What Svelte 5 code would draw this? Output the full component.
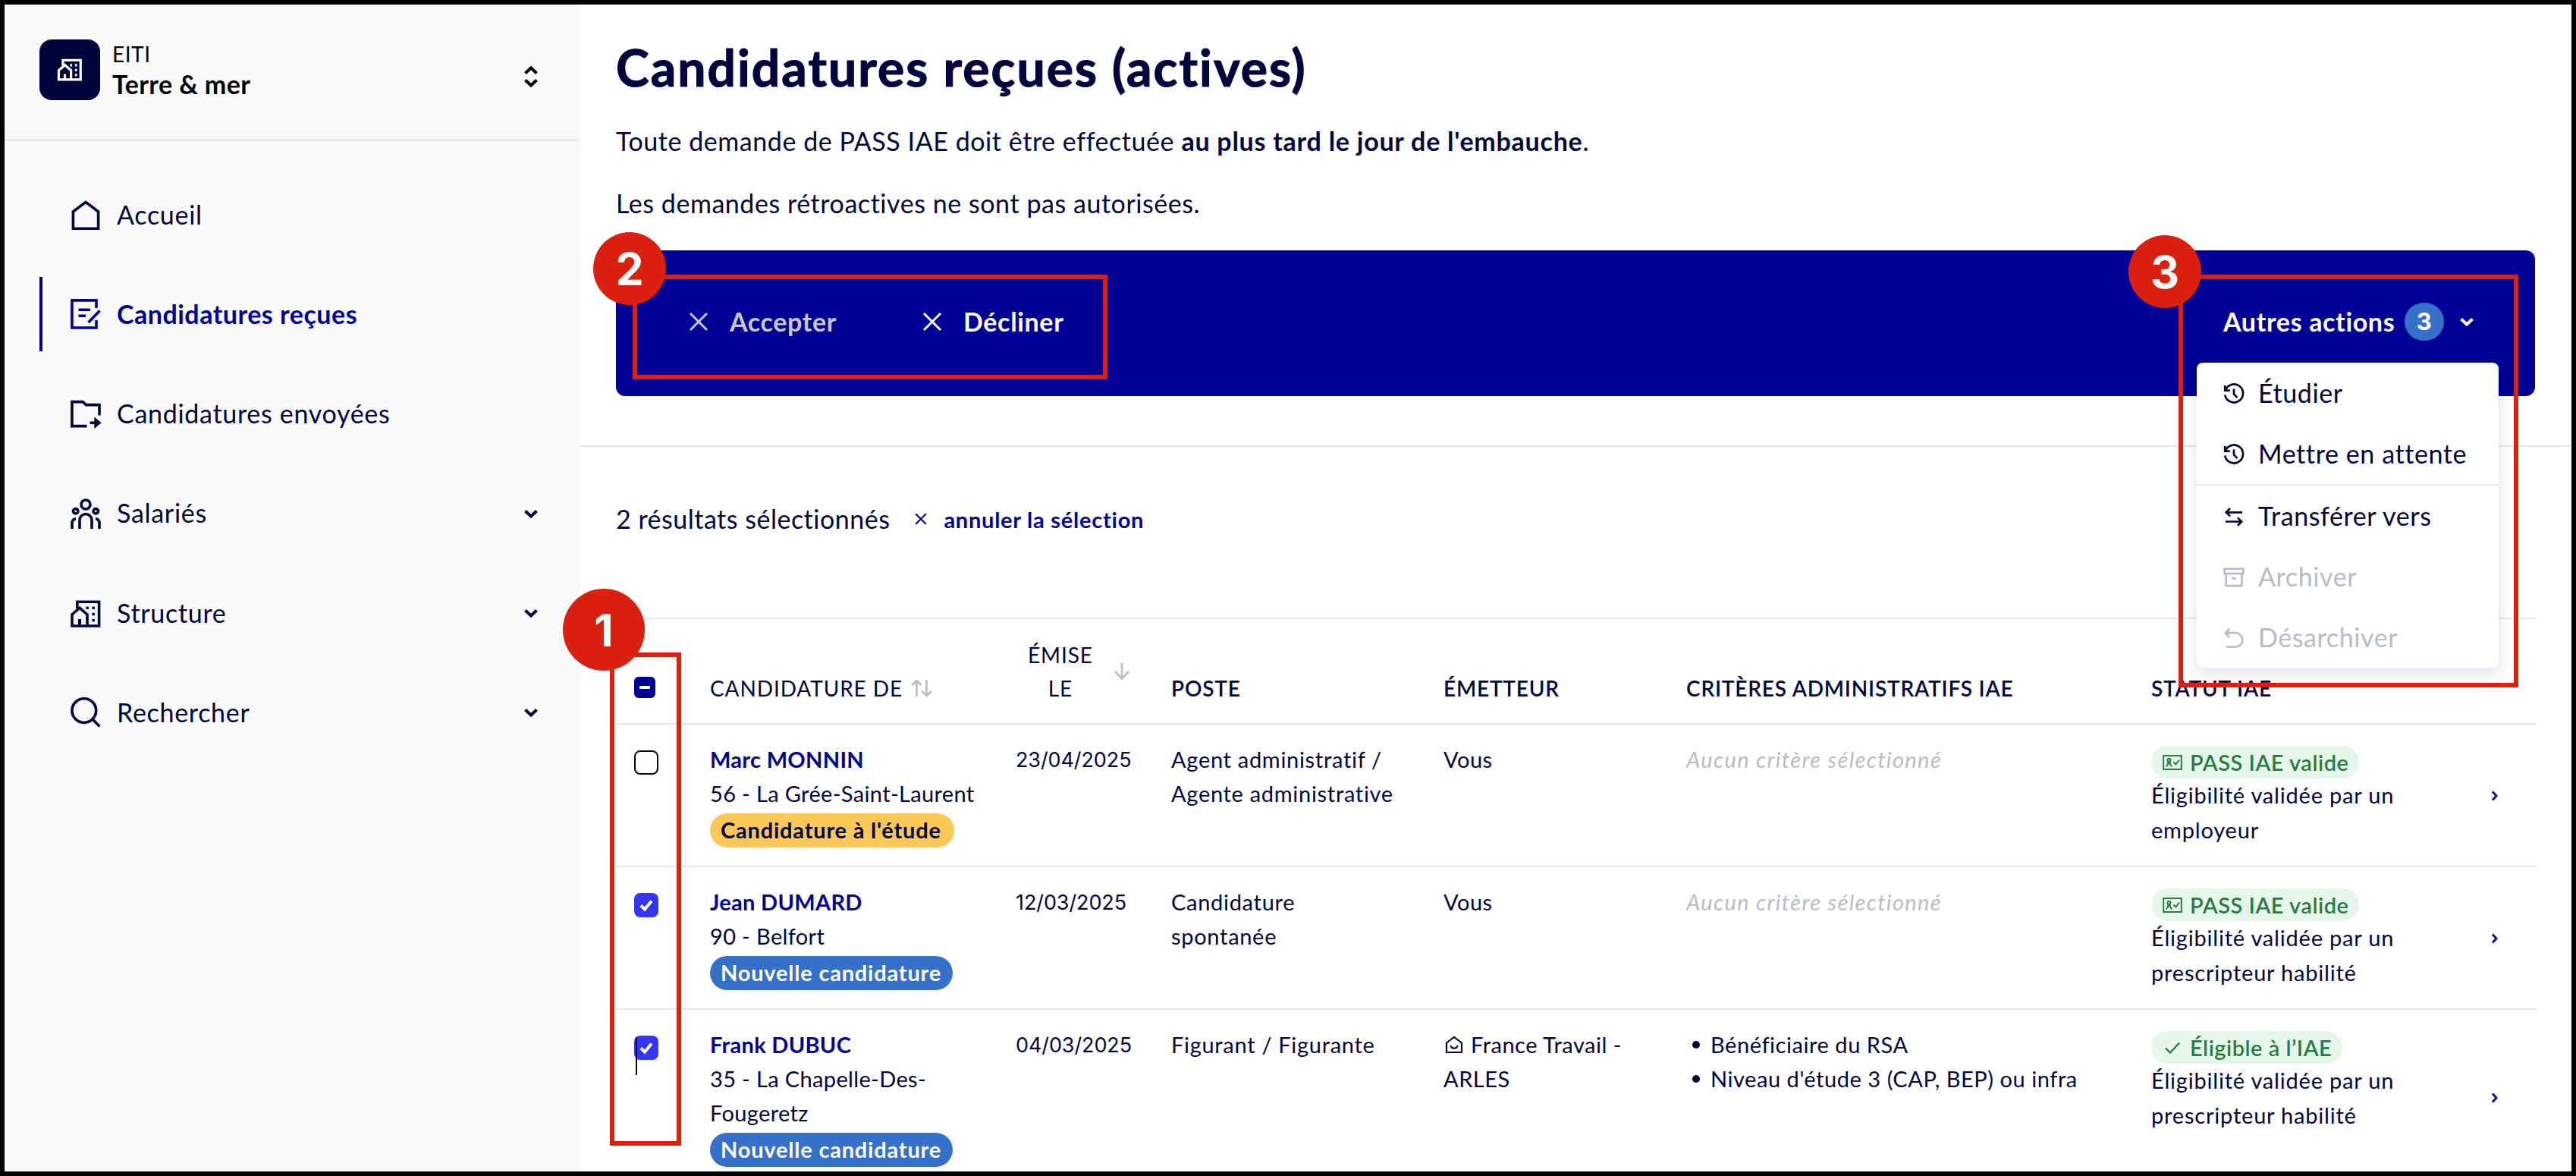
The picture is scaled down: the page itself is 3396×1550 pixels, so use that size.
<script lang="ts">
  type NavItem = { label: string; icon: string; active?: boolean; expandable?: boolean };
  type Row = {
    name: string;
    city: string[];
    state: string;
    pending?: boolean;
    date: string;
    job: string[];
    sender: string[];
    orienter?: boolean;
    criteria: string[];
    pass: string;
    passIcon: 'card' | 'check';
    eligibility: string[];
    checked: boolean;
  };

  const navItems: NavItem[] = [
    { label: 'Accueil', icon: 'home' },
    { label: 'Candidatures reçues', icon: 'edit', active: true },
    { label: 'Candidatures envoyées', icon: 'folder' },
    { label: 'Salariés', icon: 'group', expandable: true },
    { label: 'Structure', icon: 'building', expandable: true },
    { label: 'Rechercher', icon: 'search', expandable: true },
  ];

  const actions = [
    { label: 'Étudier', icon: 'history' },
    { label: 'Mettre en attente', icon: 'history', divider: true },
    { label: 'Transférer vers', icon: 'swap' },
    { label: 'Archiver', icon: 'archive', disabled: true },
    { label: 'Désarchiver', icon: 'undo', disabled: true },
  ];

  let rows = $state<Row[]>([
    {
      name: 'Marc MONNIN',
      city: ['56 - La Grée-Saint-Laurent'],
      state: "Candidature à l'étude",
      pending: true,
      date: '23/04/2025',
      job: ['Agent administratif /', 'Agente administrative'],
      sender: ['Vous'],
      criteria: [],
      pass: 'PASS IAE valide',
      passIcon: 'card',
      eligibility: ['Éligibilité validée par un', 'employeur'],
      checked: false,
    },
    {
      name: 'Jean DUMARD',
      city: ['90 - Belfort'],
      state: 'Nouvelle candidature',
      date: '12/03/2025',
      job: ['Candidature', 'spontanée'],
      sender: ['Vous'],
      criteria: [],
      pass: 'PASS IAE valide',
      passIcon: 'card',
      eligibility: ['Éligibilité validée par un', 'prescripteur habilité'],
      checked: true,
    },
    {
      name: 'Frank DUBUC',
      city: ['35 - La Chapelle-Des-', 'Fougeretz'],
      state: 'Nouvelle candidature',
      date: '04/03/2025',
      job: ['Figurant / Figurante'],
      sender: ['France Travail -', 'ARLES'],
      orienter: true,
      criteria: ['Bénéficiaire du RSA', "Niveau d'étude 3 (CAP, BEP) ou infra"],
      pass: 'Éligible à l’IAE',
      passIcon: 'check',
      eligibility: ['Éligibilité validée par un', 'prescripteur habilité'],
      checked: true,
    },
  ]);

  let selected = $derived(rows.filter((r) => r.checked).length);
</script>

{#snippet building()}
  <path d="M8.8 14V5.3H37.6V37H2V22L12 13.2L22 22V37" />
  <path d="M12 37V28" stroke-width="4" />
  <path d="M20.4 13.3h3.4M28.4 13.3h3.4M28.4 21.5h3.4M28.4 29.5h3.4" />
{/snippet}

{#snippet chevron()}
  <svg class="chevron" viewBox="0 0 20 14"><path d="M2.5 3.5L10 10.5L17.5 3.5" /></svg>
{/snippet}

{#snippet cross(cls: string)}
  <svg class="cross {cls}" viewBox="0 0 26 26"><path d="M2 2L24 24M24 2L2 24" /></svg>
{/snippet}

<div class="frame">
  <aside class="sidebar">
    <div class="org">
      <div class="org-logo">
        <svg viewBox="0 0 40 42">{@render building()}</svg>
      </div>
      <div class="org-text">
        <span class="org-kind">EITI</span>
        <span class="org-name">Terre &amp; mer</span>
      </div>
      <svg class="selector" viewBox="0 0 20 28"><path d="M2.5 9.5L10 2.5L17.5 9.5M2.5 18.5L10 25.5L17.5 18.5" /></svg>
    </div>

    <nav>
      {#each navItems as item}
        <a href="#{item.icon}" class="nav-item" class:active={item.active}>
          <svg class="nav-icon" viewBox="0 0 40 40">
            {#if item.icon === 'home'}
              <path d="M3.4 16L20 3.4L36.6 16V38.2H3.4Z" />
            {:else if item.icon === 'edit'}
              <path d="M34 12V1.9H1.9V38H34V28" />
              <path d="M10.5 14.3H26M10.5 22.3H20M38.5 15.5L23.5 31" />
            {:else if item.icon === 'folder'}
              <path d="M38 21.5V7.6H20.3L16.3 3.6H1.9V35.6H21.5" />
              <path d="M25.5 31.3H33" />
              <path class="solid" d="M31.3 23.6L40.6 31.3L31.3 39Z" />
            {:else if item.icon === 'group'}
              <circle cx="20" cy="8" r="6" />
              <circle cx="6.7" cy="16.8" r="3.2" />
              <circle cx="33.3" cy="16.8" r="3.2" />
              <path d="M12 40V28.5a8 8 0 0 1 16 0V40M2 40V32.5q0-5 5-6M38 40V32.5q0-5-5-6" />
            {:else if item.icon === 'building'}
              {@render building()}
            {:else}
              <circle cx="17.8" cy="17.6" r="15.9" />
              <path d="M28.5 28.5L38.5 38.5" />
            {/if}
          </svg>
          <span>{item.label}</span>
          {#if item.expandable}{@render chevron()}{/if}
        </a>
      {/each}
    </nav>
  </aside>

  <main>
    <header class="page-head">
      <h1>Candidatures reçues (actives)</h1>
      <p>Toute demande de PASS IAE doit être effectuée <strong>au plus tard le jour de l'embauche</strong>.</p>
      <p>Les demandes rétroactives ne sont pas autorisées.</p>

      <div class="action-bar">
        <button class="bar-btn muted">{@render cross('')}Accepter</button>
        <button class="bar-btn">{@render cross('')}Décliner</button>
        <div class="dropdown">
          <button class="bar-btn toggle">
            <span>Autres actions</span>
            <span class="count">3</span>
            {@render chevron()}
          </button>
          <ul class="menu">
            {#each actions as action}
              <li class:disabled={action.disabled} class:divider={action.divider}>
                <svg viewBox="0 0 28 28">
                  {#if action.icon === 'history'}
                    <path d="M2.2 3V9.6H8.8" />
                    <path d="M2.8 9.2A12 12 0 1 1 2.2 15.5M14 7.5V14.5L18.5 19" />
                  {:else if action.icon === 'swap'}
                    <path d="M25 8.3H4M9 3L3.8 8.3L9 13.4M3 20.5H24M19 15.4L24.2 20.5L19 25.8" />
                  {:else if action.icon === 'archive'}
                    <path d="M1.6 2.8H26.4V9H1.6ZM3.6 9V25.2H24.4V9M11 15.2H17" />
                  {:else}
                    <path d="M8.5 1.5L3 7.2L8.5 13M3.5 7.2H16a9.2 9.2 0 0 1 0 18.4H4" />
                  {/if}
                </svg>
                {action.label}
              </li>
            {/each}
          </ul>
        </div>
      </div>
    </header>

    <section class="results">
      <div class="summary">
        <span>{selected} résultats sélectionnés</span>
        {@render cross('tiny')}
        <a href="#reset">annuler la sélection</a>
      </div>

      <div class="table">
        <div class="row thead">
          <div><span class="box partial"></span></div>
          <div class="sortable">
            CANDIDATURE DE
            <svg class="sort" viewBox="0 0 28 24"><path d="M7.5 23V2M1.5 8L7.5 2L13.5 8M20.5 1V22M14.5 16L20.5 22L26.5 16" /></svg>
          </div>
          <div class="sent">
            <span>ÉMISE<br />LE</span>
            <svg viewBox="0 0 22 24"><path d="M11 1V21M2 12L11 21.5L20 12" /></svg>
          </div>
          <div class="strong">POSTE</div>
          <div class="strong">ÉMETTEUR</div>
          <div class="strong">CRITÈRES ADMINISTRATIFS IAE</div>
          <div class="strong">STATUT IAE</div>
          <div></div>
        </div>

        {#each rows as row, i}
          <div class="row">
            <div class="check-cell">
              <span class="box" class:checked={row.checked}>
                {#if row.checked}
                  <svg viewBox="0 0 20 18"><path d="M3 9.5L8 14.5L17 3.5" /></svg>
                {/if}
              </span>
              {#if i === rows.length - 1}<span class="caret"></span>{/if}
            </div>
            <div class="candidate">
              <a class="name" href="#{i}">{row.name}</a>
              {#each row.city as line}<div>{line}</div>{/each}
              <span class="state" class:pending={row.pending}>{row.state}</span>
            </div>
            <div class="date">{row.date}</div>
            <div class="job">{#each row.job as line}<div>{line}</div>{/each}</div>
            <div>
              {#each row.sender as line, n}
                <div class="sender">
                  {#if row.orienter && n === 0}
                    <svg viewBox="0 0 24 24"><path d="M2 9.5L12 1.8L22 9.5V22H2ZM7.5 13a4.6 4.6 0 0 0 9 0" /></svg>
                  {/if}
                  {line}
                </div>
              {/each}
            </div>
            <div>
              {#if row.criteria.length}
                <ul class="criteria">
                  {#each row.criteria as c}<li>{c}</li>{/each}
                </ul>
              {:else}
                <i class="none">Aucun critère sélectionné</i>
              {/if}
            </div>
            <div class="status">
              <span class="pass">
                {#if row.passIcon === 'card'}
                  <svg viewBox="0 0 26 22">
                    <path d="M1.2 2H24.8V20H1.2Z" />
                    <circle cx="8.5" cy="7.8" r="2" />
                    <path d="M4.8 16.5L8.5 11L12.2 16.5M6 11.2H11M14.5 10.5L17.5 13.5L22 7.5" />
                  </svg>
                {:else}
                  <svg viewBox="0 0 26 22"><path d="M4 11.5L10 17.5L22 4.5" stroke-width="2.4" /></svg>
                {/if}
                {row.pass}
              </span>
              {#each row.eligibility as line}<div>{line}</div>{/each}
            </div>
            <div class="go">
              <svg viewBox="0 0 8 14"><path d="M1.5 1.5L6.5 7L1.5 12.5" /></svg>
            </div>
          </div>
        {/each}
      </div>
    </section>
  </main>

  <!-- Numbered callouts laid over the page -->
  <div class="callout one"><b>1</b></div>
  <div class="callout two"><b>2</b></div>
  <div class="callout three"><b>3</b></div>
</div>

<style>
  :global(body) {
    background: #fff;
  }
  .frame {
    --navy: #00053d;
    --blue: #000096;
    --line: #e7e8ee;
    --grey: #b9bac9;
    --red: #dc200f;
    position: relative;
    box-sizing: border-box;
    width: 3396px;
    height: 1550px;
    border: 6px solid #000;
    overflow: hidden;
    display: flex;
    font-family: Lato, 'Open Sans', sans-serif;
    font-size: 34px;
    line-height: 50px;
    letter-spacing: 0.55px;
    color: var(--navy);
    background: #fff;
  }
  svg {
    flex: none;
    fill: none;
    stroke: currentColor;
    overflow: visible;
  }
  a {
    color: inherit;
    text-decoration: none;
  }
  ul {
    list-style: none;
    margin: 0;
    padding: 0;
  }

  /* Sidebar */
  .sidebar {
    width: 758px;
    flex: none;
    background: #f9f9f9;
  }
  .org {
    height: 177px;
    display: flex;
    align-items: flex-start;
    border-bottom: 3px solid var(--line);
    color: #000;
  }
  .org-logo {
    width: 80px;
    height: 80px;
    margin: 46px 16px 0 46px;
    display: flex;
    align-items: center;
    justify-content: center;
    border-radius: 16px;
    background: var(--navy);
    color: #fff;
  }
  .org-logo svg {
    width: 34px;
    height: 34px;
    stroke-width: 4;
  }
  .org-text {
    display: flex;
    flex-direction: column;
    flex: 1;
    margin-top: 47px;
  }
  .org-kind {
    font-size: 28px;
    line-height: 36px;
  }
  .org-name {
    font-weight: 700;
    line-height: 43px;
    letter-spacing: 0.4px;
  }
  .selector {
    width: 20px;
    height: 28px;
    margin: 81px 54px 0 0;
    stroke-width: 4;
  }
  nav {
    padding-top: 48px;
    display: flex;
    flex-direction: column;
    gap: 33.3px;
  }
  .nav-item {
    height: 98px;
    margin-left: 46px;
    padding: 0 54px 0 37px;
    display: flex;
    align-items: center;
    gap: 21px;
    border-left: 4px solid transparent;
  }
  .nav-item span {
    flex: 1;
    margin-top: -1px;
    letter-spacing: 0.7px;
  }
  .nav-item.active {
    font-weight: 700;
    color: var(--blue);
    border-color: var(--blue);
  }
  .nav-item.active span {
    letter-spacing: 0.5px;
  }
  .nav-icon {
    width: 40px;
    height: 40px;
    stroke-width: 3.6;
  }
  .nav-icon .solid {
    fill: currentColor;
    stroke: none;
  }
  .chevron {
    width: 20px;
    height: 14px;
    stroke-width: 4;
  }

  /* Page head */
  main {
    flex: 1;
  }
  .page-head {
    height: 583px;
    box-sizing: border-box;
    padding: 43px 48px 0;
    border-bottom: 2px solid var(--line);
  }
  h1 {
    margin: 0;
    font-size: 66px;
    line-height: 80px;
    font-weight: 700;
    letter-spacing: 2.05px;
    -webkit-text-stroke: 1.2px currentColor;
  }
  p {
    margin: 32px 0 0;
  }
  strong {
    letter-spacing: 0.75px;
  }
  .action-bar {
    box-sizing: border-box;
    height: 192px;
    margin-top: 37px;
    padding: 69px 48px 0 96px;
    display: flex;
    align-items: flex-start;
    border-radius: 12px;
    background: var(--blue);
  }
  .bar-btn {
    display: flex;
    align-items: center;
    gap: 28px;
    width: 308px;
    padding: 0;
    border: 0;
    background: none;
    font: inherit;
    font-weight: 700;
    letter-spacing: 0.65px;
    color: #fff;
  }
  .bar-btn.muted {
    color: #c8c8cc;
  }
  .cross {
    width: 26px;
    height: 26px;
    stroke-width: 3;
  }
  .cross.tiny {
    width: 16px;
    height: 16px;
    margin: 0 22px 0 33px;
    stroke-width: 3.6;
    color: var(--blue);
  }
  .dropdown {
    position: relative;
    width: 398px;
    margin-left: auto;
  }
  .toggle {
    width: 100%;
    box-sizing: border-box;
    padding: 0 32px 0 35px;
    gap: 0;
  }
  .toggle .count {
    width: 52px;
    height: 50px;
    margin: 0 20px 0 auto;
    border-radius: 26px;
    background: #3570cb;
    font: 700 31px/50px Inter, sans-serif;
    text-align: center;
  }
  .menu {
    position: absolute;
    top: 79px;
    left: 0;
    width: 398px;
    height: 402px;
    border-radius: 8px;
    background: #fff;
    box-shadow: 0 8px 24px rgba(0, 6, 56, 0.12);
    z-index: 1;
  }
  .menu li {
    box-sizing: border-box;
    height: 80px;
    padding: 0 0 1px 35px;
    display: flex;
    align-items: center;
    gap: 18px;
    letter-spacing: 0.6px;
  }
  .menu li.divider {
    height: 82px;
    border-bottom: 2px solid var(--line);
  }
  .menu li.disabled {
    color: var(--grey);
  }
  .menu svg {
    width: 28px;
    height: 28px;
    margin-top: 2px;
    stroke-width: 2.7;
  }

  /* Results */
  .results {
    padding: 69px 46px 0 48px;
  }
  .summary {
    display: flex;
    align-items: center;
    margin-bottom: 104px;
  }
  .summary span {
    letter-spacing: 0.5px;
  }
  .summary a {
    margin-top: 2px;
    font-size: 29px;
    font-weight: 700;
    letter-spacing: 0.75px;
    color: var(--blue);
  }
  .table {
    border-top: 2px solid var(--line);
    font-size: 29px;
    line-height: 45px;
    letter-spacing: 0.5px;
  }
  .row {
    box-sizing: border-box;
    display: grid;
    grid-template-columns: 124px 404px 204px 359px 320px 613px 448px 60px;
    padding-top: 23px;
    height: 188px;
    border-bottom: 2px solid var(--line);
  }
  .row:last-child {
    height: 232px;
  }
  .thead {
    height: 139px;
    padding: 0 0 24px;
    align-items: end;
    font-size: 28px;
    line-height: 44px;
    letter-spacing: 0.9px;
  }
  .strong {
    font-weight: 600;
    letter-spacing: 0.8px;
  }
  .sortable {
    display: flex;
    align-items: center;
    gap: 11px;
  }
  .thead svg {
    color: var(--grey);
    stroke-width: 2.6;
  }
  .sort {
    width: 28px;
    height: 24px;
  }
  .sent {
    display: flex;
    align-items: center;
    padding-left: 15px;
    gap: 27px;
    text-align: center;
  }
  .sent svg {
    width: 22px;
    height: 24px;
  }
  .box {
    box-sizing: border-box;
    display: flex;
    align-items: center;
    justify-content: center;
    width: 32px;
    height: 32px;
    margin-left: 24px;
    border: 2.5px solid var(--navy);
    border-radius: 8px;
    background: #fff;
  }
  .box.checked {
    border: 0;
    background: #3535f5;
    color: #fff;
  }
  .box svg {
    width: 20px;
    height: 18px;
    stroke-width: 4;
  }
  .box.partial {
    width: 28px;
    height: 28px;
    margin-bottom: 9px;
    border: 0;
    border-radius: 6px;
    background: var(--blue);
  }
  .box.partial::after {
    content: '';
    width: 14px;
    height: 4px;
    border-radius: 1px;
    background: #fff;
  }
  .check-cell {
    position: relative;
    padding-top: 11px;
  }
  .caret {
    position: absolute;
    top: 13px;
    left: 26px;
    width: 2px;
    height: 50px;
    background: var(--navy);
  }
  .candidate {
    letter-spacing: 0.35px;
  }
  .name {
    font-weight: 700;
    letter-spacing: 0.3px;
    color: var(--blue);
  }
  .state {
    display: block;
    box-sizing: border-box;
    width: 320px;
    height: 45px;
    margin-top: 4px;
    padding-left: 14px;
    border-radius: 23px;
    background: #3570cb;
    color: #fff;
    font-weight: 700;
    line-height: 44px;
    letter-spacing: 0.8px;
    white-space: nowrap;
  }
  .state.pending {
    width: 322px;
    background: #fbc858;
    color: var(--navy);
  }
  .date {
    font: 400 27px/47px Inter, sans-serif;
    letter-spacing: -0.1px;
    margin-left: -1px;
  }
  .job {
    letter-spacing: 0.7px;
  }
  .sender {
    display: flex;
    align-items: center;
    gap: 10px;
  }
  .sender svg {
    width: 24px;
    height: 24px;
    margin-left: 2px;
    stroke-width: 2.2;
  }
  .none {
    color: var(--grey);
    letter-spacing: 1.35px;
  }
  .criteria li {
    display: flex;
    align-items: center;
    gap: 14px;
    padding-left: 8px;
    letter-spacing: 0.55px;
  }
  .criteria li::before {
    content: '';
    width: 10px;
    height: 10px;
    border-radius: 50%;
    background: currentColor;
  }
  .status {
    line-height: 46px;
    letter-spacing: 0.8px;
  }
  .pass {
    display: flex;
    align-items: center;
    gap: 10px;
    width: fit-content;
    height: 43px;
    margin: 5px 0 -1px;
    padding: 0 14px 0 15px;
    border-radius: 22px;
    background: #e6f6eb;
    color: #2b7b45;
    font-weight: 600;
    letter-spacing: 0.5px;
  }
  .pass svg {
    width: 26px;
    height: 22px;
    stroke-width: 2;
  }
  .go {
    display: flex;
    align-items: center;
    padding-bottom: 22px;
    color: var(--blue);
  }
  .go svg {
    width: 9px;
    height: 14px;
    stroke-width: 2.8;
  }

  /* Callouts */
  .callout {
    position: absolute;
    box-sizing: border-box;
    border: 6px solid var(--red);
    z-index: 2;
  }
  .callout b {
    position: absolute;
    display: flex;
    align-items: center;
    justify-content: center;
    width: 96px;
    height: 96px;
    border-radius: 50%;
    background: var(--red);
    color: #fafafa;
    font: 700 59px/1 Inter, sans-serif;
    letter-spacing: 0;
  }
  .one {
    left: 798px;
    top: 854px;
    width: 94px;
    height: 650px;
  }
  .one b {
    left: -68px;
    top: -90px;
    width: 108px;
    height: 108px;
  }
  .two {
    left: 828px;
    top: 356px;
    width: 626px;
    height: 138px;
  }
  .two b {
    left: -58px;
    top: -62px;
  }
  .three {
    left: 2866px;
    top: 356px;
    width: 448px;
    height: 544px;
  }
  .three b {
    left: -72px;
    top: -58px;
  }
</style>
